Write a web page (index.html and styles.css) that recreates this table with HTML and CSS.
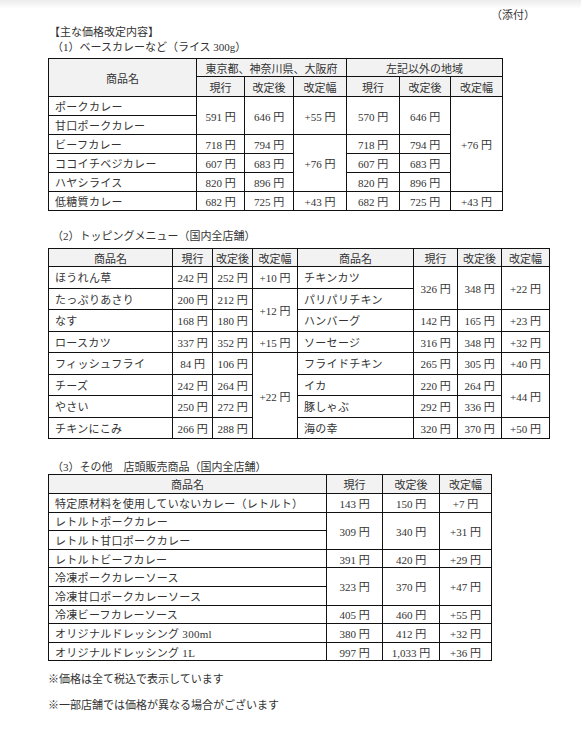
FILE: index.html
```html
<!DOCTYPE html>
<html lang="ja">
<head>
<meta charset="utf-8">
<title>価格改定内容</title>
<link rel="stylesheet" href="styles.css">
</head>
<body>
<div class="page">
  <div class="attach">（添付）</div>
  <div class="heading">【主な価格改定内容】</div>
  <div class="sub">（1）ベースカレーなど（ライス 300g）</div>
  <table class="t t1">
    <colgroup>
      <col class="c148"><col class="c48"><col class="c49"><col class="c53"><col class="c53"><col class="c51"><col class="c52">
    </colgroup>
    <tr class="h18">
      <th rowspan="2">商品名</th>
      <th colspan="3">東京都、神奈川県、大阪府</th>
      <th colspan="3">左記以外の地域</th>
    </tr>
    <tr class="h20">
      <th>現行</th><th>改定後</th><th>改定幅</th><th>現行</th><th>改定後</th><th>改定幅</th>
    </tr>
    <tr>
      <td class="n">ポークカレー</td>
      <td rowspan="2">591 円</td><td rowspan="2">646 円</td><td rowspan="2">+55 円</td>
      <td rowspan="2">570 円</td><td rowspan="2">646 円</td><td rowspan="5">+76 円</td>
    </tr>
    <tr><td class="n">甘口ポークカレー</td></tr>
    <tr>
      <td class="n">ビーフカレー</td><td>718 円</td><td>794 円</td><td rowspan="3">+76 円</td>
      <td>718 円</td><td>794 円</td>
    </tr>
    <tr>
      <td class="n">ココイチベジカレー</td><td>607 円</td><td>683 円</td>
      <td>607 円</td><td>683 円</td>
    </tr>
    <tr>
      <td class="n">ハヤシライス</td><td>820 円</td><td>896 円</td>
      <td>820 円</td><td>896 円</td>
    </tr>
    <tr>
      <td class="n">低糖質カレー</td><td>682 円</td><td>725 円</td><td>+43 円</td>
      <td>682 円</td><td>725 円</td><td>+43 円</td>
    </tr>
  </table>

  <div class="sub sub2">（2）トッピングメニュー（国内全店舗）</div>
  <table class="t t2">
    <colgroup>
      <col class="c124"><col class="c40"><col class="c40"><col class="c45"><col class="c116"><col class="c44"><col class="c44"><col class="c48">
    </colgroup>
    <tr class="h18">
      <th>商品名</th><th>現行</th><th>改定後</th><th>改定幅</th>
      <th>商品名</th><th>現行</th><th>改定後</th><th>改定幅</th>
    </tr>
    <tr>
      <td class="n">ほうれん草</td><td>242 円</td><td>252 円</td><td>+10 円</td>
      <td class="n">チキンカツ</td><td rowspan="2">326 円</td><td rowspan="2">348 円</td><td rowspan="2">+22 円</td>
    </tr>
    <tr>
      <td class="n">たっぷりあさり</td><td>200 円</td><td>212 円</td><td rowspan="2">+12 円</td>
      <td class="n">パリパリチキン</td>
    </tr>
    <tr>
      <td class="n">なす</td><td>168 円</td><td>180 円</td>
      <td class="n">ハンバーグ</td><td>142 円</td><td>165 円</td><td>+23 円</td>
    </tr>
    <tr>
      <td class="n">ロースカツ</td><td>337 円</td><td>352 円</td><td>+15 円</td>
      <td class="n">ソーセージ</td><td>316 円</td><td>348 円</td><td>+32 円</td>
    </tr>
    <tr>
      <td class="n">フィッシュフライ</td><td>84 円</td><td>106 円</td><td rowspan="4">+22 円</td>
      <td class="n">フライドチキン</td><td>265 円</td><td>305 円</td><td>+40 円</td>
    </tr>
    <tr>
      <td class="n">チーズ</td><td>242 円</td><td>264 円</td>
      <td class="n">イカ</td><td>220 円</td><td>264 円</td><td rowspan="2">+44 円</td>
    </tr>
    <tr>
      <td class="n">やさい</td><td>250 円</td><td>272 円</td>
      <td class="n">豚しゃぶ</td><td>292 円</td><td>336 円</td>
    </tr>
    <tr>
      <td class="n">チキンにこみ</td><td>266 円</td><td>288 円</td>
      <td class="n">海の幸</td><td>320 円</td><td>370 円</td><td>+50 円</td>
    </tr>
  </table>

  <div class="sub sub3">（3）その他　店頭販売商品（国内全店舗）</div>
  <table class="t t3">
    <colgroup>
      <col class="c278"><col class="c56"><col class="c57"><col class="c52">
    </colgroup>
    <tr class="h19">
      <th>商品名</th><th>現行</th><th>改定後</th><th>改定幅</th>
    </tr>
    <tr>
      <td class="n">特定原材料を使用していないカレー（レトルト）</td><td>143 円</td><td>150 円</td><td>+7 円</td>
    </tr>
    <tr>
      <td class="n">レトルトポークカレー</td><td rowspan="2">309 円</td><td rowspan="2">340 円</td><td rowspan="2">+31 円</td>
    </tr>
    <tr><td class="n">レトルト甘口ポークカレー</td></tr>
    <tr>
      <td class="n">レトルトビーフカレー</td><td>391 円</td><td>420 円</td><td>+29 円</td>
    </tr>
    <tr>
      <td class="n">冷凍ポークカレーソース</td><td rowspan="2">323 円</td><td rowspan="2">370 円</td><td rowspan="2">+47 円</td>
    </tr>
    <tr><td class="n">冷凍甘口ポークカレーソース</td></tr>
    <tr>
      <td class="n">冷凍ビーフカレーソース</td><td>405 円</td><td>460 円</td><td>+55 円</td>
    </tr>
    <tr>
      <td class="n">オリジナルドレッシング 300ml</td><td>380 円</td><td>412 円</td><td>+32 円</td>
    </tr>
    <tr>
      <td class="n">オリジナルドレッシング 1L</td><td>997 円</td><td>1,033 円</td><td>+36 円</td>
    </tr>
  </table>

  <p class="note note1">※価格は全て税込で表示しています</p>
  <p class="note note2">※一部店舗では価格が異なる場合がございます</p>
</div>
</body>
</html>
```

FILE: styles.css
```css
html, body {
  margin: 0;
  padding: 0;
  background: #ffffff;
}
body {
  font-family: "Liberation Serif", "Noto Sans CJK JP", serif;
  font-size: 11px;
  color: #333333;
  background: linear-gradient(#ececec 0px, #ffffff 9px) no-repeat;
}
.page {
  padding: 8px 0 0 48px;
}
.attach {
  text-align: right;
  padding-right: 46px;
  line-height: 14px;
  height: 14px;
}
.heading {
  margin-top: 3px;
  line-height: 14px;
  padding-left: 1px;
}
.sub {
  margin-top: 1px;
  line-height: 14px;
  padding-left: 4px;
}
.sub2 { margin-top: 18px; }
.sub3 { margin-top: 21px; }
.t {
  border-collapse: collapse;
  table-layout: fixed;
  margin-top: 4px;
}
.t1 { width: 454px; }
.t2 { width: 501px; margin-top: 5px; }
.t3 { width: 443px; margin-top: 0; }
.t th, .t td {
  border: 1px solid #111111;
  padding: 0;
  text-align: center;
  font-weight: normal;
  white-space: nowrap;
  overflow: hidden;
}
.t th { background: #f2f2f2; }
.t td.n {
  text-align: left;
  padding-left: 6px;
  letter-spacing: 0.3px;
}
.t1 tr { height: 19px; }
.t1 tr.h18 { height: 18px; }
.t1 tr.h20 { height: 20px; }
.t2 tr { height: 21.5px; }
.t2 tr.h18 { height: 18px; }
.t3 tr { height: 18.6px; }
.t3 tr.h19 { height: 19px; }
.c148 { width: 148px; }
.c48 { width: 48px; }
.c49 { width: 49px; }
.c53 { width: 53px; }
.c51 { width: 51px; }
.c52 { width: 52px; }
.c124 { width: 124px; }
.c40 { width: 40px; }
.c45 { width: 45px; }
.c116 { width: 116px; }
.c44 { width: 44px; }
.c278 { width: 278px; }
.c56 { width: 56px; }
.c57 { width: 57px; }
.note {
  margin: 0;
  line-height: 14px;
}
.note1 { margin-top: 11px; }
.note2 { margin-top: 12px; }
```
